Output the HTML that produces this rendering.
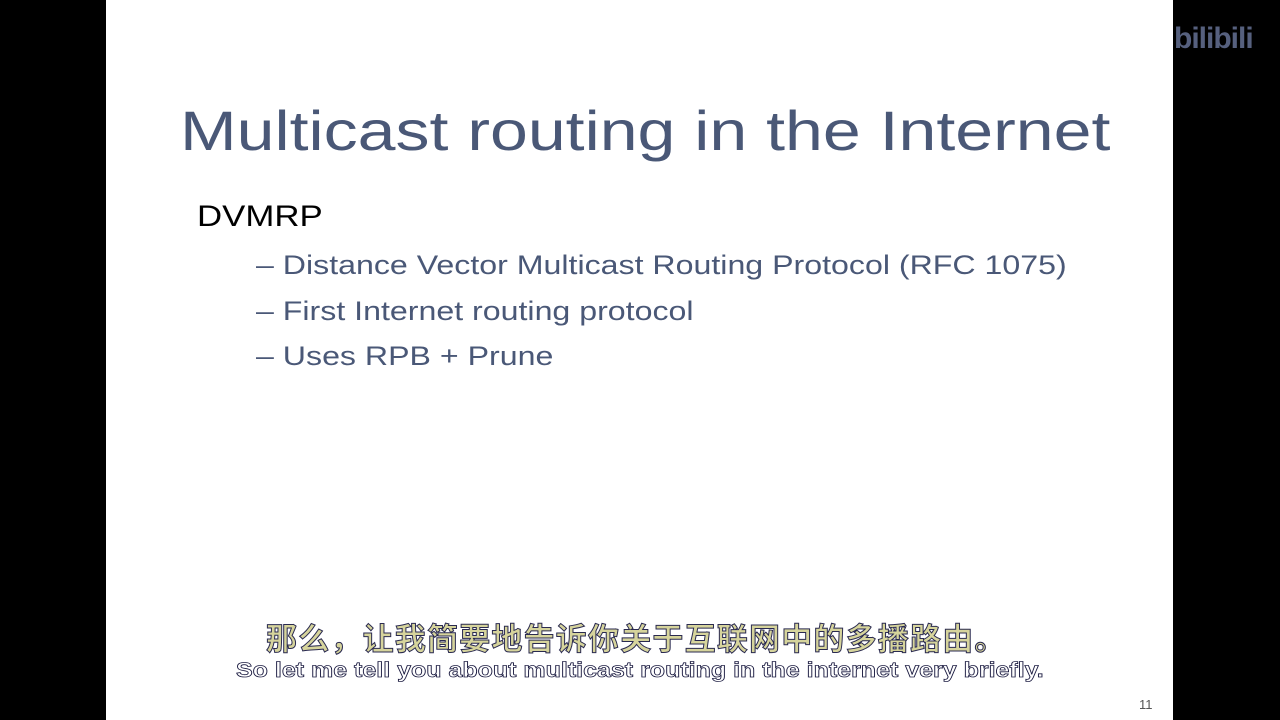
<!DOCTYPE html>
<html><head><meta charset="utf-8"><style>
body{margin:0;width:1280px;height:720px;background:#000;position:relative;overflow:hidden;font-family:"Liberation Sans","Noto Sans CJK SC",sans-serif}
.slide{position:absolute;left:106px;top:0;width:1067px;height:720px;background:#fff}
.t{position:absolute;white-space:nowrap;transform-origin:left center}
.title{left:180px;top:98px;font-size:56px;color:#4a5877;transform:scaleX(1.215)}
.h{left:197px;top:200px;font-size:30px;color:#000;transform:scaleX(1.16)}
.b{font-size:27px;color:#4a5877;transform:scaleX(1.19)}
.zh{left:266px;top:614px;font-size:31px;font-weight:bold;color:#d6d49c;-webkit-text-stroke:1px #2a2a50;letter-spacing:1.2px}
.en{left:236px;top:659px;font-size:21px;font-weight:bold;color:#fff;-webkit-text-stroke:0.8px #1a1a40;transform:scaleX(1.19)}
.logo{left:1174px;top:22px;font-size:30px;font-weight:bold;color:#56607e;letter-spacing:-1px}
</style></head><body>
<div class="slide"></div>
<div class="t title">Multicast routing in the Internet</div>
<div class="t h">DVMRP</div>
<div class="t b" style="left:256px;top:250px">–&nbsp;Distance Vector Multicast Routing Protocol (RFC 1075)</div>
<div class="t b" style="left:256px;top:296px">–&nbsp;First Internet routing protocol</div>
<div class="t b" style="left:256px;top:341px">–&nbsp;Uses RPB + Prune</div>
<div class="t zh">那么，让我简要地告诉你关于互联网中的多播路由。</div>
<div class="t en">So let me tell you about multicast routing in the internet very briefly.</div>
<div class="t" style="left:1139px;top:697px;font-size:13px;color:#555">11</div>
<div class="t logo">bilibili</div>
</body></html>
